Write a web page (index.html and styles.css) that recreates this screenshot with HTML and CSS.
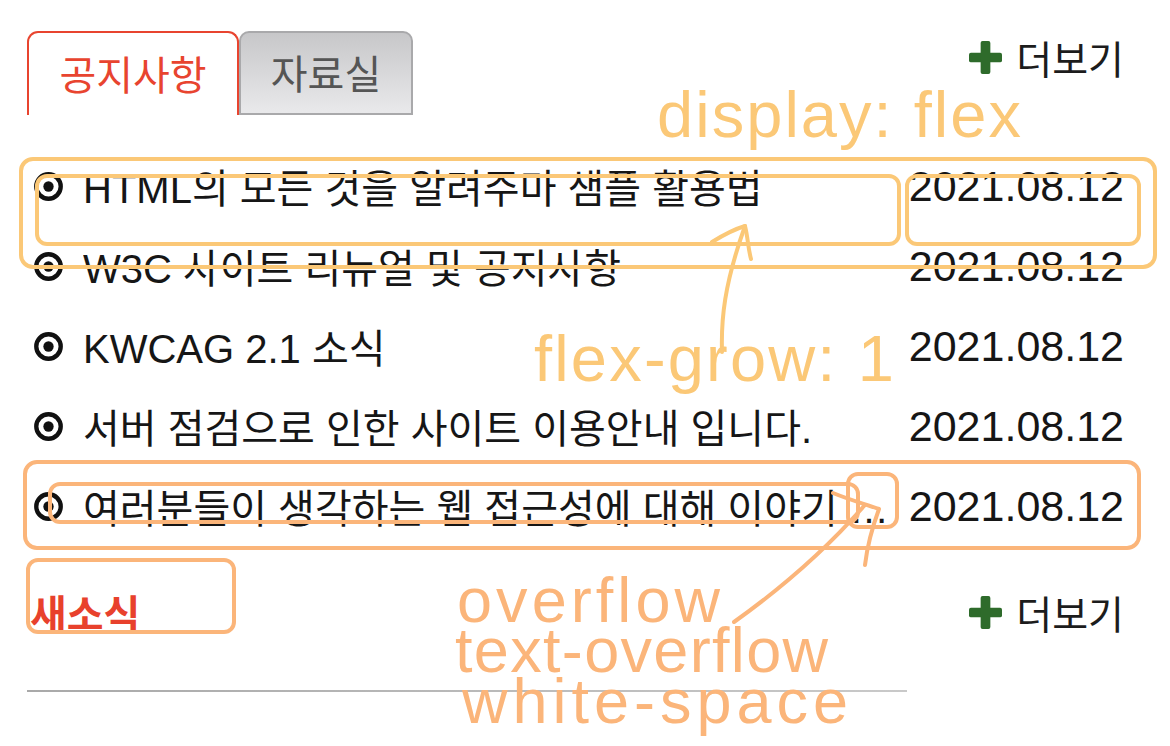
FILE: index.html
```html
<!DOCTYPE html>
<html lang="ko">
<head>
<meta charset="utf-8">
<title>공지사항</title>
<link rel="stylesheet" href="styles.css">
</head>
<body>
<div class="page">
  <section class="board">
    <div class="board-head">
      <div class="tabs">
        <div class="tab tab-active">공지사항</div>
        <div class="tab tab-idle">자료실</div>
      </div>
      <a class="more">
        <svg class="plus" viewBox="0 0 34 34" width="34" height="34"><rect x="0" y="12" width="34" height="10" rx="2"/><rect x="12" y="0" width="10" height="34" rx="2"/></svg>
        <span>더보기</span>
      </a>
    </div>
    <ul class="list">
      <li class="item"><svg class="dot" viewBox="0 0 28 28" width="28" height="28"><circle cx="14" cy="14" r="11.8" fill="none" stroke="#111" stroke-width="4.2"/><circle cx="14" cy="14" r="5" fill="#111"/></svg><span class="title">HTML의 모든 것을 알려주마 샘플 활용법</span><span class="date">2021.08.12</span></li>
      <li class="item"><svg class="dot" viewBox="0 0 28 28" width="28" height="28"><circle cx="14" cy="14" r="11.8" fill="none" stroke="#111" stroke-width="4.2"/><circle cx="14" cy="14" r="5" fill="#111"/></svg><span class="title">W3C 사이트 리뉴얼 및 공지사항</span><span class="date">2021.08.12</span></li>
      <li class="item"><svg class="dot" viewBox="0 0 28 28" width="28" height="28"><circle cx="14" cy="14" r="11.8" fill="none" stroke="#111" stroke-width="4.2"/><circle cx="14" cy="14" r="5" fill="#111"/></svg><span class="title">KWCAG 2.1 소식</span><span class="date">2021.08.12</span></li>
      <li class="item"><svg class="dot" viewBox="0 0 28 28" width="28" height="28"><circle cx="14" cy="14" r="11.8" fill="none" stroke="#111" stroke-width="4.2"/><circle cx="14" cy="14" r="5" fill="#111"/></svg><span class="title">서버 점검으로 인한 사이트 이용안내 입니다.</span><span class="date">2021.08.12</span></li>
      <li class="item"><svg class="dot" viewBox="0 0 28 28" width="28" height="28"><circle cx="14" cy="14" r="11.8" fill="none" stroke="#111" stroke-width="4.2"/><circle cx="14" cy="14" r="5" fill="#111"/></svg><span class="title">여러분들이 생각하는 웹 접근성에 대해 이야기 해봅시다</span><span class="date">2021.08.12</span></li>
    </ul>
  </section>
  <section class="news">
    <div class="news-head">
      <h2 class="news-title">새소식</h2>
      <a class="more">
        <svg class="plus" viewBox="0 0 34 34" width="34" height="34"><rect x="0" y="12" width="34" height="10" rx="2"/><rect x="12" y="0" width="10" height="34" rx="2"/></svg>
        <span>더보기</span>
      </a>
    </div>
    <hr class="rule">
  </section>
</div>

<svg class="notes" viewBox="0 0 1170 746" width="1170" height="746">
  <g fill="none" stroke="#fbc877" stroke-width="4" stroke-linecap="round" stroke-linejoin="round">
    <rect x="21" y="159" width="1134" height="108" rx="12"/>
    <rect x="37" y="176" width="862" height="68" rx="10"/>
    <rect x="907" y="176" width="232" height="68" rx="10"/>
    <path d="M722,352 C721,320 724,285 745,226"/>
    <path d="M712,242 C725,234 735,229 745,226 C748,238 748,248 751,259"/>
  </g>
  <g fill="#fbc877" font-family="'Liberation Sans', Arial, sans-serif" font-size="65">
    <text x="657" y="137" textLength="364" lengthAdjust="spacing">display: flex</text>
    <text x="534" y="381" textLength="360" lengthAdjust="spacing">flex-grow: 1</text>
  </g>
  <g fill="none" stroke="#fbb57a" stroke-width="4" stroke-linecap="round" stroke-linejoin="round">
    <rect x="25" y="462" width="1114" height="86" rx="12"/>
    <rect x="50" y="484" width="808" height="38" rx="10"/>
    <rect x="848" y="474" width="49" height="53" rx="10"/>
    <rect x="28" y="560" width="206" height="72" rx="10"/>
    <path d="M734,622 C790,582 830,545 864,506"/>
    <path d="M833,493 C850,500 865,504 879,509 C872,528 867,548 865,565"/>
  </g>
  <g fill="#fbb57a" font-family="'Liberation Sans', Arial, sans-serif" font-size="63">
    <text x="457" y="622" textLength="263" lengthAdjust="spacing">overflow</text>
    <text x="455" y="672" textLength="373" lengthAdjust="spacing">text-overflow</text>
    <text x="462" y="723" textLength="386" lengthAdjust="spacing">white-space</text>
  </g>
</svg>
</body>
</html>
```

FILE: styles.css
```css
html, body {
  margin: 0;
  padding: 0;
  background: #ffffff;
}

body {
  width: 1170px;
  height: 746px;
  overflow: hidden;
  position: relative;
  font-family: "Liberation Sans", "Noto Sans CJK KR", Arial, sans-serif;
  color: #161616;
}

.page {
  padding: 31px 46px 0 27px;
}

.board-head {
  display: flex;
  justify-content: space-between;
  align-items: flex-start;
}

.tabs {
  display: flex;
}

.tab {
  box-sizing: border-box;
  height: 84px;
  display: flex;
  align-items: center;
  justify-content: center;
  font-family: "Noto Sans CJK KR", sans-serif;
  font-size: 40px;
  padding-bottom: 2px;
}

.tab-active {
  width: 212px;
  border: 2px solid #e8442f;
  border-bottom: none;
  border-radius: 11px 11px 0 0;
  color: #e8442f;
  background: #ffffff;
}

.tab-idle {
  width: 174px;
  border: 2px solid #a9a9ab;
  border-radius: 10px 10px 0 0;
  background: linear-gradient(#c7c7c9, #e9e9eb);
  color: #555555;
}

.more {
  display: flex;
  align-items: center;
  gap: 14px;
  margin-top: -2px;
  color: #1c1c1c;
  font-family: "Noto Sans CJK KR", sans-serif;
  font-size: 39px;
  text-decoration: none;
}

.plus {
  fill: #2e6b2b;
  width: 33px;
  height: 33px;
}

.list {
  list-style: none;
  margin: 31px 0 0 0;
  padding: 0;
}

.item {
  display: flex;
  align-items: center;
  height: 80px;
  font-size: 40px;
}

.dot {
  flex: none;
  margin-left: 7px;
  margin-right: 20px;
  width: 29px;
  height: 29px;
}

.title {
  flex-grow: 1;
  min-width: 0;
  overflow: hidden;
  text-overflow: ellipsis;
  white-space: nowrap;
  font-family: "Liberation Sans", "Noto Sans CJK KR", sans-serif;
}

.date {
  flex: none;
  margin-left: 18px;
  font-family: "Liberation Sans", Arial, sans-serif;
  font-size: 43px;
  color: #161616;
}

.news-head {
  display: flex;
  justify-content: space-between;
  align-items: center;
  margin-top: 46px;
  height: 40px;
}

.news-title {
  margin: 0 0 0 3px;
  font-family: "Noto Sans CJK KR", sans-serif;
  font-size: 40px;
  font-weight: 700;
  color: #e8412c;
  line-height: 1;
}

.news .more {
  margin-top: 0;
}

.rule {
  width: 880px;
  margin: 58px 0 0 0;
  border: none;
  height: 2px;
  background: linear-gradient(90deg, #a9a9a9, #c9c9c9);
}

.notes {
  position: absolute;
  left: 0;
  top: 0;
  pointer-events: none;
}
```
